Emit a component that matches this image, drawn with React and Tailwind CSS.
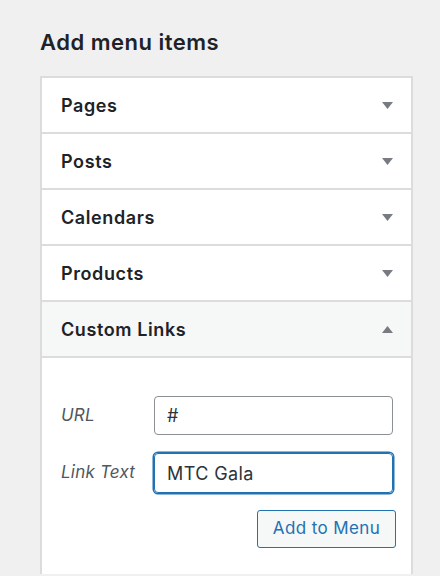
import { useState } from 'react'

const sections = ['Pages', 'Posts', 'Calendars', 'Products']

function Caret({ up }) {
  return (
    <svg width="11" height="7" viewBox="0 0 11 7" aria-hidden="true" className="shrink-0">
      {up ? <path d="M0 7 L5.5 0 L11 7 Z" fill="#787c82" /> : <path d="M0 0 L11 0 L5.5 7 Z" fill="#787c82" />}
    </svg>
  )
}

export default function App() {
  const [url, setUrl] = useState('#')
  const [linkText, setLinkText] = useState('MTC Gala')

  return (
    <div className="min-h-[576px] bg-[#f0f0f1] pl-10 pt-[28px] font-['Inter','Liberation_Sans',sans-serif] text-[#1d2327]">
      <h2 className="text-[22px] font-semibold leading-[28px] tracking-[0.5px]">Add menu items</h2>

      <div className="mt-[20px] w-[373px] border-2 border-b-0 border-[#dcdcde] bg-white">
        {sections.map((s) => (
          <div
            key={s}
            className="flex h-[56px] items-center justify-between border-b-2 border-[#dcdcde] pl-[19px] pr-[18px]"
          >
            <span className="text-[18px] font-semibold tracking-[0.6px]">{s}</span>
            <Caret />
          </div>
        ))}

        <div className="flex h-[56px] items-center justify-between border-b-2 border-[#dcdcde] bg-[#f6f7f7] pl-[19px] pr-[18px]">
          <span className="text-[18px] font-semibold tracking-[0.6px]">Custom Links</span>
          <Caret up />
        </div>

        <div className="pb-[26px] pl-[19px] pr-[15px] pt-[38px]">
          <div className="flex items-center">
            <label className="w-[93px] text-[17px] italic tracking-[0.2px] text-[#50575e]">URL</label>
            <input
              value={url}
              onChange={(e) => setUrl(e.target.value)}
              className="h-[39px] w-[239px] rounded-[4px] border border-[#8c8f94] px-[12px] text-[18px] text-[#2c3338] outline-none"
            />
          </div>
          <div className="mt-[18px] flex items-center">
            <label className="w-[93px] text-[17px] italic tracking-[0.2px] text-[#50575e]">Link Text</label>
            <input
              value={linkText}
              onChange={(e) => setLinkText(e.target.value)}
              className="h-[40px] w-[239px] rounded-[4px] border border-[#2271b1] px-[12px] text-[18px] tracking-[0.4px] text-[#2c3338] shadow-[0_0_0_1.5px_#2271b1] outline-none"
            />
          </div>
          <div className="mt-[17px] flex justify-end">
            <button
              type="button"
              className="h-[38px] w-[139px] rounded-[3px] border border-[#2271b1] bg-[#f6f7f7] text-[17px] tracking-[0.4px] text-[#2271b1]"
            >
              Add to Menu
            </button>
          </div>
        </div>
      </div>
    </div>
  )
}
